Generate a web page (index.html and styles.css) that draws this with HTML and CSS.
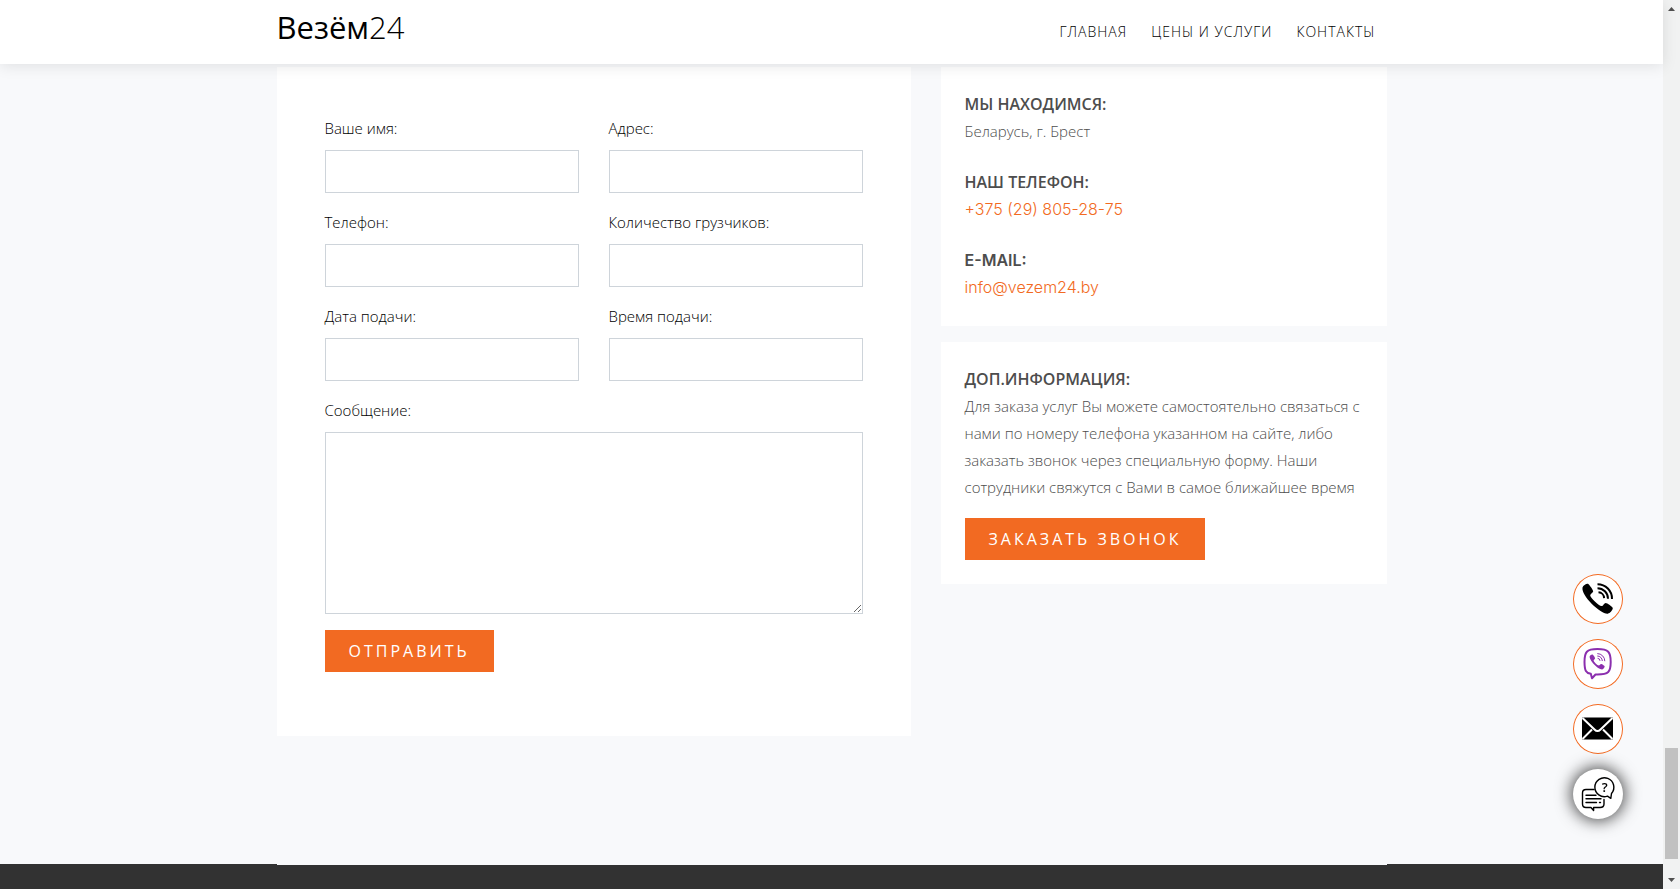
FILE: index.html
```html
<!DOCTYPE html>
<html lang="ru">
<head>
<meta charset="utf-8">
<title>Везём24 — Контакты</title>
<link rel="stylesheet" href="styles.css">
</head>
<body>
<div class="page">
  <header class="header">
    <div class="container header-row">
      <a class="logo" href="#"><span class="logo-name">Везём</span>24</a>
      <nav class="nav">
        <a href="#">Главная</a>
        <a href="#">Цены и услуги</a>
        <a href="#">Контакты</a>
      </nav>
    </div>
  </header>

  <main class="contact">
    <div class="container contact-grid">
      <form class="card form">
        <div class="field"><label for="name">Ваше имя:</label><input id="name" type="text"></div>
        <div class="field"><label for="address">Адрес:</label><input id="address" type="text"></div>
        <div class="field"><label for="phone">Телефон:</label><input id="phone" type="tel"></div>
        <div class="field"><label for="movers">Количество грузчиков:</label><input id="movers" type="text"></div>
        <div class="field"><label for="date">Дата подачи:</label><input id="date" type="text"></div>
        <div class="field"><label for="time">Время подачи:</label><input id="time" type="text"></div>
        <div class="field field-wide"><label for="message">Сообщение:</label><textarea id="message"></textarea></div>
        <button class="btn" type="submit">Отправить</button>
      </form>

      <aside class="side">
        <section class="card info">
          <div>
            <h2>Мы находимся:</h2>
            <p>Беларусь, г. Брест</p>
          </div>
          <div>
            <h2>Наш телефон:</h2>
            <a class="geo" href="tel:+375298052875">+375 (29) 805-28-75</a>
          </div>
          <div>
            <h2 class="geo-title">E-mail:</h2>
            <a class="geo" href="mailto:info@vezem24.by">info@vezem24.by</a>
          </div>
        </section>
        <section class="card extra">
          <h2>Доп.информация:</h2>
          <p>Для заказа услуг Вы можете самостоятельно связаться с нами по номеру телефона указанном на сайте, либо заказать звонок через специальную форму. Наши сотрудники свяжутся с Вами в самое ближайшее время</p>
          <button class="btn" type="button">Заказать звонок</button>
        </section>
      </aside>
    </div>
  </main>

  <footer class="footer"><div class="container"><div class="footer-line"></div></div></footer>
</div>

<div class="scroll" aria-hidden="true">
  <svg class="scroll-arrow" viewBox="0 0 17 17"><path d="M5 11h7L8.500 7z"/></svg>
  <div class="scroll-thumb"></div>
  <svg class="scroll-arrow" viewBox="0 0 17 17"><path d="M5 6h7L8.500 10z"/></svg>
</div>

<div class="widget">
  <a class="round" href="#" aria-label="Позвонить">
    <svg viewBox="0 0 50 50">
      <path d="M9.500 13.500C10.200 11.200 13.300 9.300 15 9.700c1.200.8 5.200 6.200 5.200 7.600 0 1.600-3 2.400-3 4.200 0 2 8.800 10.600 11.300 10.600 1.700 0 2.600-3.200 4.200-3.200 1.400 0 7 3.700 7.100 5.200 0 2-2.800 5.300-5 5.600C28 40.500 8 22 9.500 13.500z"/>
      <path class="line phone-arc" d="M24.500 10.200A14.500 14.500 0 0 1 39 25M24.500 14.200A10.500 10.500 0 0 1 35 24.700M25.500 18.300a6 6 0 0 1 5.600 5.800"/>
    </svg>
  </a>
  <a class="round viber" href="#" aria-label="Viber">
    <svg viewBox="0 0 50 50">
      <path class="line viber-bubble" d="M17.800 34.800C13 34 11.600 32 11.500 23 11.500 13 13.500 10 24.500 10S37.700 13 37.700 23 35.500 35.300 24.500 35.500H22.500L19 39.300z"/>
      <path d="M16.700 17.300c.4-1.200 2-2.200 2.900-1.800.8.500 2.500 3 2.500 3.800 0 .9-1.500 1.400-1.500 2.200 0 1.200 3.800 5 5.300 5 .8 0 1.300-1.500 2.200-1.500.8 0 3.600 1.800 3.600 2.600 0 1-1.500 2.800-2.500 2.900C25.500 31 15.700 21 16.700 17.300z"/>
      <path class="line viber-arc" d="M24.300 14.600a7.500 7.500 0 0 1 7.500 7.600M24.300 17a5 5 0 0 1 5 5M24.600 19.300a2.600 2.600 0 0 1 2.400 2.500"/>
    </svg>
  </a>
  <a class="round" href="#" aria-label="Почта">
    <svg viewBox="0 0 50 50">
      <rect x="9" y="13.500" width="31" height="22" rx="1"/>
      <path class="line mail-fold" d="M9.500 14L21.500 25.500q3 3.200 6 0L39.500 14M9.500 35L19 25.500M39.500 35L30 25.500"/>
    </svg>
  </a>
  <button class="round round-main" type="button" aria-label="Чат">
    <svg viewBox="0 0 50 50">
      <path class="line chat" d="M21 20.500H13q-3.500 0-3.500 3.500v11q0 3.500 3.500 3.500h5l2.600 3V38.500H27q4 0 4-3.500V30.500"/>
      <path class="line chat" d="M34.500 27.200A9.500 9.500 0 1 1 38.500 24.500L37.800 29.300z"/>
      <path class="line chat" d="M13 26.200h10M13 29.800h15M13 33.500h10.500M26.500 33.500h1"/>
      <text class="chat-mark" x="31.800" y="23">?</text>
    </svg>
  </button>
</div>
</body>
</html>
```
FILE: styles.css
```css
* {
  box-sizing: border-box;
}

body {
  display: flex;
  min-height: 100vh;
  margin: 0;
  background: #f8f9fb;
  color: #4d4d4d;
  font: 300 15px/27px "Open Sans", "Noto Sans", sans-serif;
}

h2,
p {
  margin: 0;
}

a {
  color: #f26a22;
  text-decoration: none;
}

.page {
  display: flex;
  flex: 1;
  flex-direction: column;
  min-width: 0;
}

.container {
  width: 100%;
  max-width: 1110px;
  margin: 0 auto;
}

/* Header */
.header {
  position: relative;
  z-index: 1;
  background: #fff;
  box-shadow: 0 2px 14px rgba(0, 0, 0, 0.1);
}

.header-row {
  display: flex;
  align-items: center;
  justify-content: space-between;
  height: 64px;
  padding-bottom: 2px;
}

.logo {
  padding-bottom: 8px;
  color: #000;
  font-size: 31px;
  line-height: 40px;
}

.logo-name {
  font-weight: 500;
}

.nav {
  display: flex;
  gap: 24px;
  padding-right: 11px;
}

.nav a {
  color: #000;
  font-size: 14px;
  letter-spacing: 1px;
  text-transform: uppercase;
}

/* Contact section */
.contact {
  padding: 3px 0 128px;
}

.contact-grid {
  display: grid;
  grid-template-columns: 634fr 446fr;
  gap: 30px;
  align-items: start;
}

.card {
  background: #fff;
}

.form {
  display: grid;
  grid-template-columns: 1fr 1fr;
  gap: 16px 30px;
  padding: 48px 48px 64px;
}

.field {
  display: flex;
  flex-direction: column;
  gap: 8px;
  color: #000;
}

.field-wide {
  grid-column: 1 / -1;
}

.field input,
.field textarea {
  width: 100%;
  height: 43px;
  padding: 6px 12px;
  border: 1px solid #ced4da;
  background: #fff;
  font: inherit;
}

.field textarea {
  height: 182px;
  resize: vertical;
}

.btn {
  justify-self: start;
  height: 42px;
  padding: 0 24px;
  border: 0;
  background: #f26a22;
  color: #fff;
  font: 500 16px/27px "Open Sans", "Noto Sans", sans-serif;
  letter-spacing: 3px;
  text-transform: uppercase;
}

.side {
  display: grid;
  gap: 16px;
}

.side .card {
  padding: 24px;
}

.side h2 {
  font-size: 16px;
  font-weight: 600;
  text-transform: uppercase;
}

.side .info {
  display: grid;
  gap: 24px;
  padding-bottom: 25px;
}

.geo,
.side .geo-title {
  font-family: Inter, "Open Sans", sans-serif;
}

.geo {
  font-size: 16px;
}

.extra .btn {
  margin-top: 17px;
}

/* Footer */
.footer {
  flex: 1;
  min-height: 24px;
  background: #323232;
}

.footer-line {
  height: 1px;
  background: #f8f9fb;
}

/* Scroll track */
.scroll {
  display: flex;
  flex-direction: column;
  width: 17px;
  background: #f1f2f2;
}

.scroll-arrow {
  width: 17px;
  height: 17px;
  fill: #505050;
}

.scroll-thumb {
  height: 111px;
  margin: auto 2px 13px;
  background: #c1c1c1;
}

/* Floating contact buttons */
.widget {
  position: fixed;
  right: 57px;
  bottom: 70px;
  display: grid;
  gap: 15px;
}

.round {
  display: block;
  width: 50px;
  height: 50px;
  padding: 0;
  border: 0;
  border-radius: 50%;
  background: #fff;
  box-shadow: inset 0 0 0 1px #f26a22;
}

.round svg {
  display: block;
}

.round-main {
  box-shadow: 0 0 16px 2px rgba(0, 0, 0, 0.7);
}

.line {
  fill: none;
  stroke: #000;
  stroke-linejoin: round;
}

.phone-arc {
  stroke-width: 2;
}

.viber {
  fill: #8b2fae;
}

.viber .line {
  stroke: #8b2fae;
}

.viber-bubble {
  stroke-width: 2;
}

.viber-arc {
  stroke-width: 1;
}

.round .mail-fold {
  stroke: #fff;
  stroke-width: 2;
}

.chat {
  stroke-width: 1.4;
  stroke-linecap: round;
}

.chat-mark {
  font: 600 13px "Open Sans", sans-serif;
  text-anchor: middle;
}
```
